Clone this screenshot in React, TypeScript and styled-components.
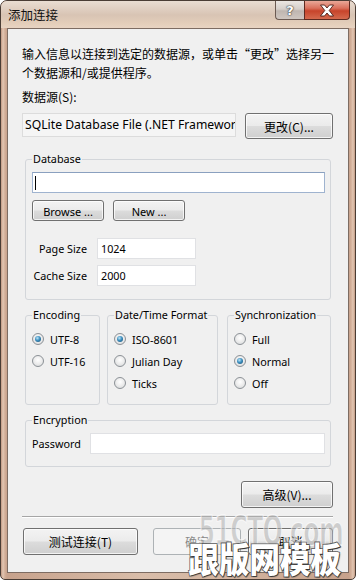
import React from "react";
import styled, { createGlobalStyle, css } from "styled-components";

const Global = createGlobalStyle`
  html, body { margin: 0; padding: 0; background: #ffffff; }
  body { width: 356px; height: 580px; overflow: hidden; }
  #root { width: 356px; height: 580px; }
  * { box-sizing: border-box; }
`;

const LATIN = `"Noto Sans", "Noto Sans CJK SC", sans-serif`;
const CJK = `"Noto Sans CJK SC", "Noto Sans", sans-serif`;

const Window = styled.div`
  position: relative;
  width: 356px;
  height: 580px;
  border: 1px solid #4a3d35;
  border-radius: 7px 7px 5px 5px;
  background: linear-gradient(
    to right,
    #c09882 0px,
    #e3c7b3 2px,
    #d2ae98 4px,
    #c7a28c 6px,
    #d9bda9 40%,
    #d4b6a2 60%,
    #c7a28c calc(100% - 6px),
    #d2ae98 calc(100% - 4px),
    #e3c7b3 calc(100% - 2px),
    #c09882 100%
  );
  display: flex;
  flex-direction: column;
  overflow: hidden;
  font-family: ${LATIN};
  color: #000;
`;

const TitleBar = styled.div`
  height: 27px;
  flex: none;
  display: flex;
  align-items: flex-start;
  justify-content: space-between;
  padding: 0 5px 0 7px;
  background: linear-gradient(
    to bottom,
    #e9ddd2 0px,
    #e2d2c5 6px,
    #d8c4b4 14px,
    #e3cdb9 22px,
    #e8d4c2 27px
  );
`;

const Title = styled.div`
  height: 27px;
  line-height: 27px;
  font-family: ${CJK};
  font-size: 12.5px;
  color: #111;
`;

const CaptionButtons = styled.div`
  display: flex;
`;

const CaptionButton = styled.div<{ $kind: "help" | "close" }>`
  height: 19px;
  display: flex;
  align-items: center;
  justify-content: center;
  border: 1px solid #6b5a52;
  border-top: none;
  ${(p) =>
    p.$kind === "help"
      ? css`
          width: 29px;
          border-right: none;
          border-radius: 0 0 0 4px;
          background: linear-gradient(to bottom, #ebe6e2 0%, #d6cfca 45%, #bfb6b0 55%, #cfc6c0 100%);
        `
      : css`
          width: 46px;
          border-color: #5e2a20;
          border-radius: 0 0 4px 0;
          background: linear-gradient(to bottom, #e9a898 0%, #d9705c 40%, #c7442b 55%, #d46a4e 100%);
        `}
`;

const HelpGlyph = styled.span`
  font-family: "DejaVu Sans", sans-serif;
  font-weight: bold;
  font-size: 13px;
  line-height: 1;
  color: #ffffff;
  text-shadow: 0 0 1px #3c3c3c, 0 0 1px #3c3c3c, 0 0 2px #555;
`;

const Client = styled.div`
  flex: 1;
  margin: 0 6px 6px 6px;
  border: 1px solid #7d6c62;
  background: #f0f0f0;
  padding: 15px 15px 0 14px;
  display: flex;
  flex-direction: column;
`;

const Description = styled.p`
  margin: 0;
  font-family: ${CJK};
  font-size: 12px;
  line-height: 19px;
  white-space: nowrap;
`;

const FieldLabel = styled.div`
  margin-top: 6px;
  font-family: ${CJK};
  font-size: 12px;
  line-height: 18px;
`;

const ActionRow = styled.div<{ $mt: number; $h: number }>`
  margin-top: ${(p) => p.$mt}px;
  height: ${(p) => p.$h}px;
  display: flex;
  align-items: flex-start;
`;

const SourceBox = styled.div`
  width: 214px;
  height: 24px;
  border: 1px solid #dcdcdc;
  background: #f5f5f5;
  padding-left: 2px;
  font-size: 12.2px;
  line-height: 22px;
  white-space: nowrap;
  overflow: hidden;
`;

const Button = styled.button<{ $w: number; $h: number; $disabled?: boolean; $ml?: number }>`
  width: ${(p) => p.$w}px;
  height: ${(p) => p.$h}px;
  flex: none;
  padding: 0;
  margin: 0 0 0 ${(p) => p.$ml ?? 0}px;
  border: 1px solid #707070;
  border-radius: 3px;
  background: linear-gradient(to bottom, #f3f3f3 0%, #ebebeb 48%, #dcdcdc 52%, #cfcfcf 100%);
  box-shadow: inset 0 0 0 1px rgba(255, 255, 255, 0.75);
  font-family: ${CJK};
  font-size: 12px;
  color: #000;
  ${(p) =>
    p.$disabled &&
    css`
      border-color: #adb2b5;
      background: #f4f4f4;
      box-shadow: none;
      color: #8a8a8a;
    `}
`;

const LatinButtonText = styled.span`
  font-family: ${LATIN};
  font-size: 11px;
`;

const PushRight = styled.div`
  margin-left: auto;
  display: flex;
`;

const Group = styled.fieldset<{ $mt?: number; $ml?: number; $w?: number; $pb: number }>`
  margin: ${(p) => p.$mt ?? 0}px 0 0 ${(p) => p.$ml ?? 0}px;
  ${(p) => (p.$w ? `width: ${p.$w}px; flex: none;` : "")}
  min-width: 0;
  padding: 5px 5px ${(p) => p.$pb}px 6px;
  border: 1px solid #d3d6da;
  border-radius: 3px;
  display: flex;
  flex-direction: column;
`;

const Legend = styled.legend`
  padding: 0 1px;
  font-size: 10.8px;
  line-height: 16px;
  white-space: nowrap;
  color: #000;
`;

const Wide = styled.div`
  margin: 0 2px 0 3px;
  display: flex;
  flex-direction: column;
`;

const TextBox = styled.div<{ $w?: number; $grow?: boolean; $focus?: boolean }>`
  height: 21px;
  flex: none;
  ${(p) => (p.$w ? `width: ${p.$w}px;` : "")}
  ${(p) => (p.$grow ? "flex: 1 1 auto; min-width: 0;" : "")}
  border: 1px solid ${(p) => (p.$focus ? "#9fb3cf" : "#e0e1e4")};
  ${(p) => p.$focus && "border-top-color: #8aa0bf;"}
  background: #ffffff;
  display: flex;
  align-items: center;
  padding-left: 3px;
  font-size: 10.8px;
`;

const Caret = styled.span`
  display: inline-block;
  width: 1px;
  height: 14px;
  background: #000;
  margin-left: -1px;
`;

const ButtonRow = styled.div`
  margin-top: 7px;
  display: flex;
  gap: 9px;
`;

const PropRow = styled.div<{ $mt: number; $gap: number }>`
  margin-top: ${(p) => p.$mt}px;
  display: flex;
  align-items: center;
  gap: ${(p) => p.$gap}px;
`;

const PropLabel = styled.div<{ $w: number; $align: "left" | "right" }>`
  width: ${(p) => p.$w}px;
  flex: none;
  text-align: ${(p) => p.$align};
  font-size: 10.8px;
  white-space: nowrap;
`;

const OptionsRow = styled.div`
  margin: 7px 2px 0 3px;
  display: flex;
  align-items: stretch;
`;

const RadioRow = styled.div`
  height: 22px;
  display: flex;
  align-items: center;
  gap: 6px;
  font-size: 10.8px;
  white-space: nowrap;
`;

const RadioCircle = styled.span<{ $on: boolean }>`
  width: 12px;
  height: 12px;
  flex: none;
  border-radius: 50%;
  border: 1px solid #8c9196;
  background: radial-gradient(circle at 50% 40%, #ffffff 0%, #eeeeee 45%, #d4d6d8 100%);
  display: flex;
  align-items: center;
  justify-content: center;
  &::after {
    content: "";
    display: ${(p) => (p.$on ? "block" : "none")};
    width: 6px;
    height: 6px;
    border-radius: 50%;
    background: radial-gradient(circle at 40% 35%, #bfe6f8 0%, #3d8fbf 45%, #15476a 100%);
  }
`;

const Separator = styled.div`
  margin-top: 8px;
  height: 2px;
  border-top: 1px solid #a6a6a6;
  border-bottom: 1px solid #ffffff;
`;

const Watermark = styled.div`
  position: absolute;
  left: 186px;
  top: 511px;
  width: 162px;
  pointer-events: none;
  display: flex;
  flex-direction: column;
  align-items: flex-end;
`;

const WatermarkSite = styled.div`
  font-family: "DejaVu Sans Condensed", "DejaVu Sans", sans-serif;
  font-weight: bold;
  font-size: 40px;
  line-height: 38px;
  letter-spacing: -1px;
  color: rgba(175, 175, 175, 0.55);
  -webkit-text-stroke: 1px rgba(255, 255, 255, 0.8);
  transform: scaleX(0.66);
  transform-origin: right center;
  margin-right: 6px;
`;

const WatermarkBrand = styled.div`
  margin-top: -12px;
  font-family: ${CJK};
  font-weight: 900;
  font-size: 30.5px;
  line-height: 36px;
  color: #ffffff;
  -webkit-text-stroke: 1.5px #5a5a5a;
  paint-order: stroke fill;
  text-shadow: 1px 1px 1px rgba(0, 0, 0, 0.5);
  transform: scaleY(1.14);
  transform-origin: top right;
  margin-right: 8px;
`;

type RadioItem = { label: string; on: boolean };

function RadioGroup({ title, width, ml, items }: { title: string; width: number; ml: number; items: RadioItem[] }) {
  return (
    <Group $w={width} $ml={ml} $pb={10}>
      <Legend>{title}</Legend>
      {items.map((it) => (
        <RadioRow key={it.label}>
          <RadioCircle $on={it.on} />
          {it.label}
        </RadioRow>
      ))}
    </Group>
  );
}

function CloseGlyph() {
  return (
    <svg width="16" height="13" viewBox="0 0 16 13">
      <path
        d="M1.5 1 H5.5 L8 4 L10.5 1 H14.5 L10.2 6.5 L14.5 12 H10.5 L8 9 L5.5 12 H1.5 L5.8 6.5 Z"
        fill="#ffffff"
        stroke="#4a2018"
        strokeWidth="0.9"
        strokeLinejoin="round"
      />
    </svg>
  );
}

export default function App() {
  return (
    <>
      <Global />
      <Window>
        <TitleBar>
          <Title>添加连接</Title>
          <CaptionButtons>
            <CaptionButton $kind="help">
              <HelpGlyph>?</HelpGlyph>
            </CaptionButton>
            <CaptionButton $kind="close">
              <CloseGlyph />
            </CaptionButton>
          </CaptionButtons>
        </TitleBar>
        <Client>
          <Description>
            输入信息以连接到选定的数据源，或单击“更改”选择另一
            <br />
            个数据源和/或提供程序。
          </Description>
          <FieldLabel>数据源(S):</FieldLabel>
          <ActionRow $mt={7} $h={26}>
            <SourceBox>SQLite Database File (.NET Framework Data Provider for SQLite)</SourceBox>
            <PushRight>
              <Button $w={88} $h={26}>更改(C)...</Button>
            </PushRight>
          </ActionRow>

          <Wide>
            <Group $mt={12} $pb={13}>
              <Legend>Database</Legend>
              <TextBox $focus>
                <Caret />
              </TextBox>
              <ButtonRow>
                <Button $w={72} $h={21}>
                  <LatinButtonText>Browse ...</LatinButtonText>
                </Button>
                <Button $w={72} $h={21}>
                  <LatinButtonText>New ...</LatinButtonText>
                </Button>
              </ButtonRow>
              <PropRow $mt={17} $gap={10}>
                <PropLabel $w={55} $align="right">Page Size</PropLabel>
                <TextBox $w={99}>1024</TextBox>
              </PropRow>
              <PropRow $mt={6} $gap={10}>
                <PropLabel $w={55} $align="right">Cache Size</PropLabel>
                <TextBox $w={99}>2000</TextBox>
              </PropRow>
            </Group>
          </Wide>

          <OptionsRow>
            <RadioGroup
              title="Encoding"
              width={75}
              ml={0}
              items={[
                { label: "UTF-8", on: true },
                { label: "UTF-16", on: false },
              ]}
            />
            <RadioGroup
              title="Date/Time Format"
              width={111}
              ml={7}
              items={[
                { label: "ISO-8601", on: true },
                { label: "Julian Day", on: false },
                { label: "Ticks", on: false },
              ]}
            />
            <RadioGroup
              title="Synchronization"
              width={104}
              ml={9}
              items={[
                { label: "Full", on: false },
                { label: "Normal", on: true },
                { label: "Off", on: false },
              ]}
            />
          </OptionsRow>

          <Wide>
            <Group $mt={7} $pb={12}>
              <Legend>Encryption</Legend>
              <PropRow $mt={0} $gap={9}>
                <PropLabel $w={49} $align="left">Password</PropLabel>
                <TextBox $grow />
              </PropRow>
            </Group>
          </Wide>

          <ActionRow $mt={14} $h={27}>
            <PushRight>
              <Button $w={92} $h={27}>高级(V)...</Button>
            </PushRight>
          </ActionRow>

          <Separator />

          <ActionRow $mt={10} $h={27}>
            <Button $w={115} $h={27} $ml={1}>测试连接(T)</Button>
            <PushRight>
              <Button $w={88} $h={27} $disabled>确定</Button>
              <Button $w={85} $h={27} $ml={7}>取消</Button>
            </PushRight>
          </ActionRow>
        </Client>
        <Watermark>
          <WatermarkSite>51CTO.com</WatermarkSite>
          <WatermarkBrand>跟版网模板</WatermarkBrand>
        </Watermark>
      </Window>
    </>
  );
}
